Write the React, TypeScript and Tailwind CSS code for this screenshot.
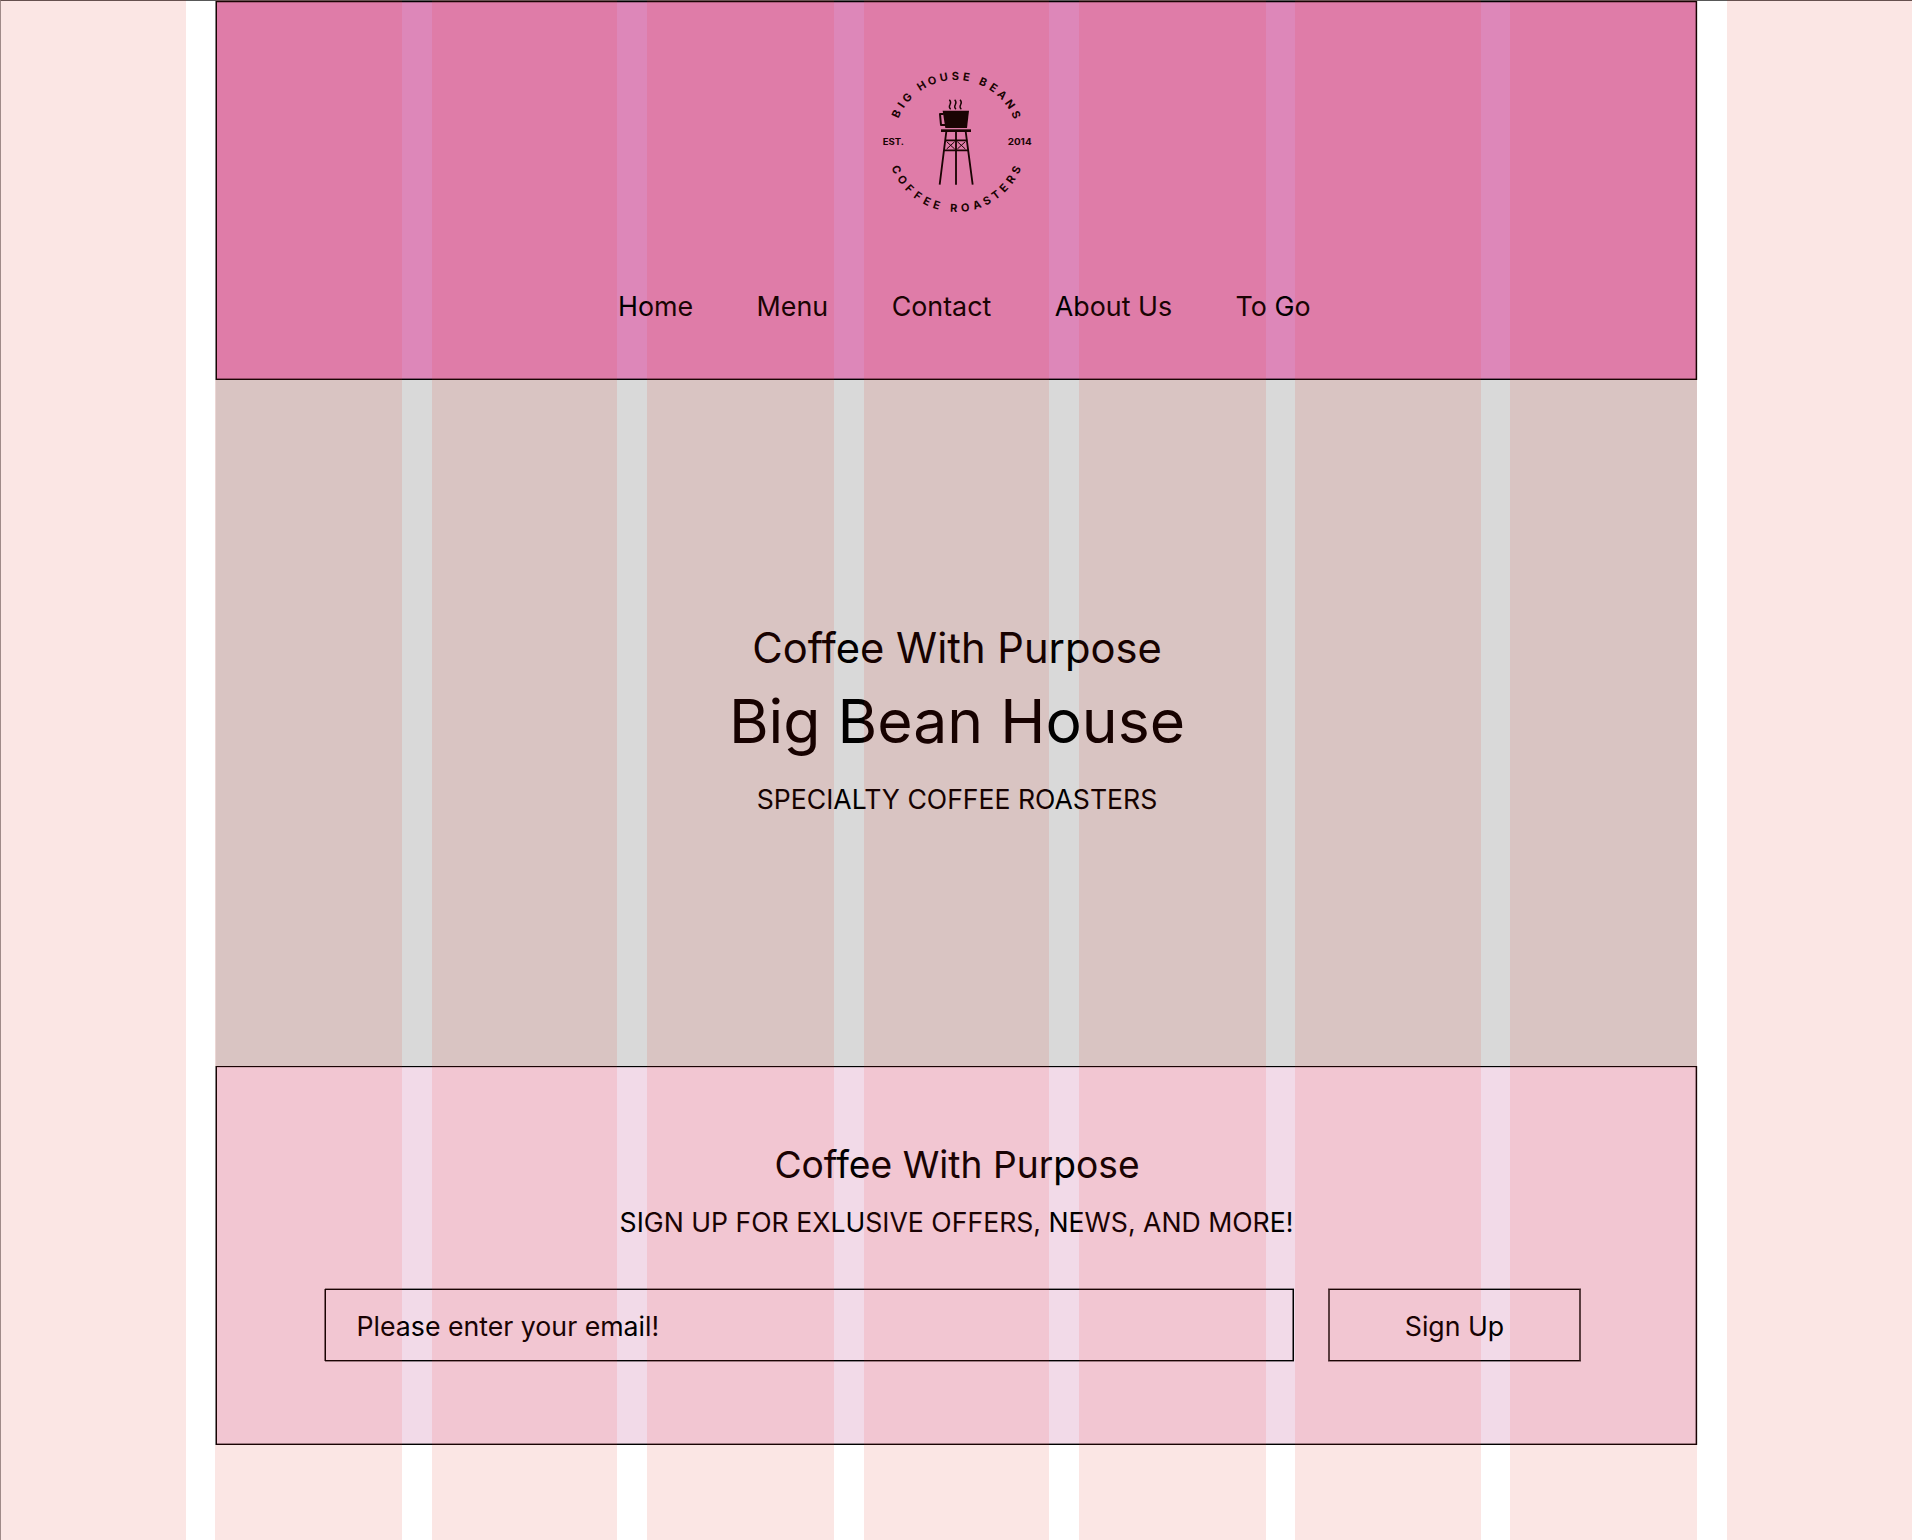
const NAV_ITEMS = ['Home', 'Menu', 'Contact', 'About Us', 'To Go'];

// Angles, in degrees from the vertical, at which each letter of the badge sits.
const TOP_ANGLES = [-64.5, -55.8, -47.4, -39, -31.5, -21.2, -10.8, -0.6, 9.0, 16, 24.3, 34.4, 44.2, 54.8, 65.2];
const BOTTOM_ANGLES = [-65.4, -55.3, -45.4, -35.7, -26.6, -17.4, -10, -2.3, 7.7, 18.3, 27.7, 36.9, 46, 55.7, 65.3];

const TOP_RADIUS = 187;
const BOTTOM_RADIUS = 209;

const offsets = (angles: number[], radius: number) =>
  angles.map((a) => (((a + 90) * Math.PI) / 180 * radius).toFixed(1)).join(' ');

function Logo() {
  return (
    <svg viewBox="0 0 516 492" className="mr-px h-[164px] w-[172px] shrink-0" aria-label="Big House Beans">
      <defs>
        <path id="arc-top" d="M71 247 A187 187 0 0 1 445 247" />
        <path id="arc-bottom" d="M50 247 A209 209 0 0 0 468 247" />
      </defs>
      <g className="font-['Inter',sans-serif] font-bold" fontSize="33" textAnchor="middle">
        <text>
          <textPath href="#arc-top">
            <tspan x={offsets(TOP_ANGLES, TOP_RADIUS)}>BIG HOUSE BEANS</tspan>
          </textPath>
        </text>
        <text>
          <textPath href="#arc-bottom">
            <tspan x={offsets(BOTTOM_ANGLES, BOTTOM_RADIUS)}>COFFEE ROASTERS</tspan>
          </textPath>
        </text>
      </g>
      <g className="font-['Inter',sans-serif] font-bold" fontSize="26">
        <text x="38" y="256" textLength="64" lengthAdjust="spacingAndGlyphs">EST.</text>
        <text x="413" y="256" textLength="72" lengthAdjust="spacingAndGlyphs">2014</text>
      </g>
      {/* Steam */}
      <g fill="none" stroke="#000" strokeWidth="4">
        <path d="M238 119c6 6 5 10 2 15s-4 9 2 14" />
        <path d="M254 119c6 6 5 10 2 15s-4 9 2 14" />
        <path d="M270 119c6 6 5 10 2 15s-4 9 2 14" />
      </g>
      {/* Cup */}
      <path d="M218 152H297L291 204H226Z" />
      <path d="M221 162H210L213 195H226" fill="none" stroke="#000" strokeWidth="6" strokeLinejoin="round" />
      {/* Water tower */}
      <rect x="213" y="208" width="90" height="8" />
      <g fill="none" stroke="#000" strokeWidth="5.5">
        <path d="M229 214L209 374M287 214L308 374M258 214V374" />
        <path d="M225 241H292M222 271H295" strokeWidth="5" />
        <path d="M230 245L254 267M254 245L230 267M262 245L286 267M286 245L262 267" strokeWidth="3" />
      </g>
    </svg>
  );
}

/* Nine translucent guides; the inner seven are tinted per section they cross. */
function ColumnGuides() {
  return (
    <div className="pointer-events-none absolute inset-0 grid grid-cols-[186px_29px_187px_30px_185px_30px_187px_30px_185px_30px_187px_29px_186px_29px_187px_30px_185px]">
      {Array.from({ length: 17 }, (_, i) => {
        if (i % 2 === 1) return <div key={i} />;
        if (i === 0 || i === 16) return <div key={i} className="bg-[rgba(217,15,0,0.105)]" />;
        return (
          <div key={i} className="flex flex-col">
            <div className={`h-[380px] bg-[rgba(245,42,25,0.105)] ${i === 2 ? 'ml-px' : ''}`} />
            <div className="h-[686px] bg-[rgba(217,15,0,0.105)]" />
            <div className={`h-[379px] bg-[rgba(245,30,28,0.105)] ${i === 2 ? 'ml-px' : ''}`} />
            <div className="grow bg-[rgba(217,15,0,0.105)]" />
          </div>
        );
      })}
    </div>
  );
}

export default function App() {
  return (
    <div className="relative h-[1540px] w-[1912px] overflow-hidden bg-white font-['Inter',sans-serif] text-black">
      <div className="flex h-full flex-col border-t border-l border-t-black/65 border-l-black/40 pl-[215px]">
        <header className="flex h-[379px] w-[1481px] flex-col items-center border border-black bg-[#dd87b9] pt-[58px] shadow-[-1px_0_0_rgba(0,0,0,0.5),1px_0_0_rgba(0,0,0,0.15),inset_-1px_0_0_rgba(0,0,0,0.35),inset_0_1px_0_rgba(0,0,0,0.25),inset_0_-1px_0_rgba(0,0,0,0.4)]">
          <Logo />
          <nav className="mt-16 flex gap-[63.4px] pl-[15.5px] text-[26.85px] leading-9 whitespace-nowrap">
            {NAV_ITEMS.map((item) => (
              <a key={item}>{item}</a>
            ))}
          </nav>
        </header>

        <section className="flex h-[686px] w-[1481px] flex-col items-center bg-[#d9d9d9] pt-[243px] pl-px shadow-[-1px_0_0_rgba(0,0,0,0.07)]">
          <p className="text-[41.7px] leading-[50px]">Coffee With Purpose</p>
          <h1 className="mt-[12px] text-[60.7px] leading-[72px]">Big Bean House</h1>
          <p className="mt-[26px] text-[26.6px] leading-8">SPECIALTY COFFEE ROASTERS</p>
        </section>

        <section className="flex h-[379px] w-[1481px] flex-col items-center border border-black bg-[#f2dae8] pt-[75px] shadow-[-1px_0_0_rgba(0,0,0,0.5),1px_0_0_rgba(0,0,0,0.15),inset_-1px_0_0_rgba(0,0,0,0.35),inset_0_1px_0_rgba(0,0,0,0.15),inset_0_-1px_0_rgba(0,0,0,0.4)]">
          <h2 className="pl-px text-[37.2px] leading-[46px]">Coffee With Purpose</h2>
          <p className="mt-[18px] text-[26.63px] leading-8">SIGN UP FOR EXLUSIVE OFFERS, NEWS, AND MORE!</p>
          <form className="mt-[51px] flex w-full pl-[108px] text-[26.7px] leading-8">
            <div className="flex h-[72px] w-[969px] items-start border border-black pt-5 pl-[30.5px] shadow-[-1px_0_0_rgba(0,0,0,0.5),0_-1px_0_rgba(0,0,0,0.4),0_1px_0_rgba(0,0,0,0.4),inset_-1px_0_0_rgba(0,0,0,0.5)]">
              Please enter your email!
            </div>
            <button
              type="button"
              className="ml-[34px] flex h-[72px] w-[253px] items-start justify-center border-x-2 border-y border-x-black/70 border-y-black pt-5 shadow-[0_-1px_0_rgba(0,0,0,0.4),0_1px_0_rgba(0,0,0,0.4)]"
            >
              Sign Up
            </button>
          </form>
        </section>
      </div>
      <ColumnGuides />
    </div>
  );
}
